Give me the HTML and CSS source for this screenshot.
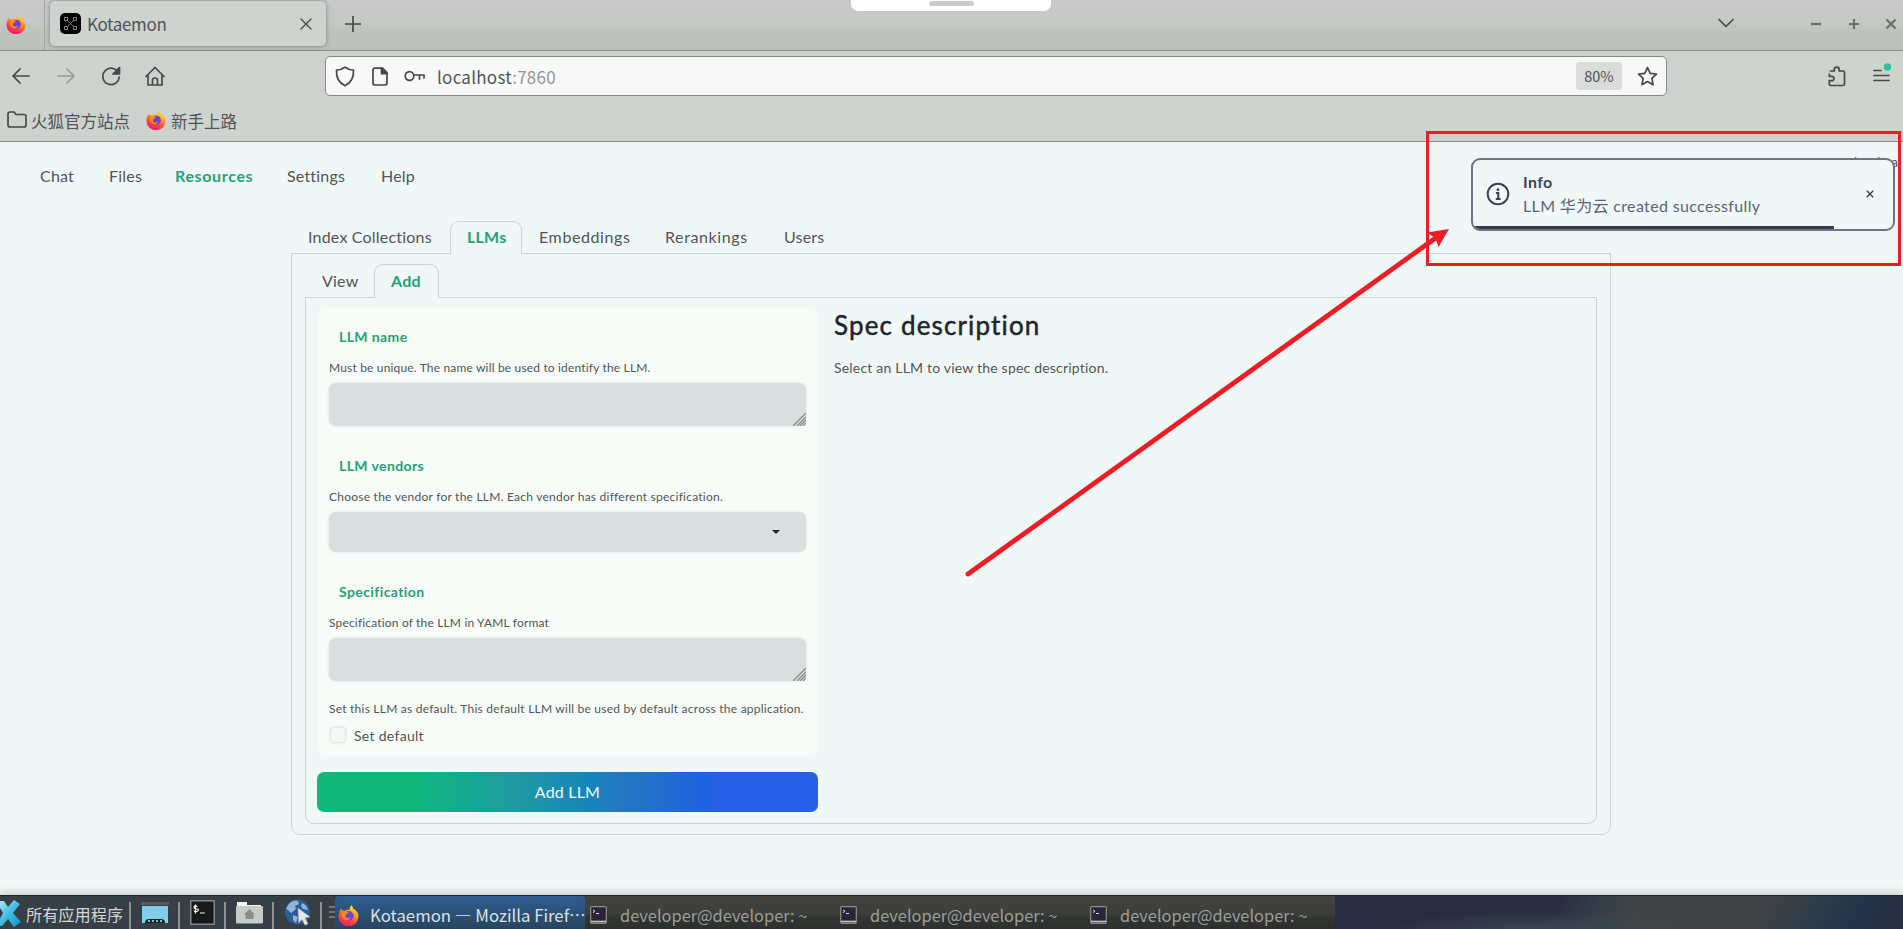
FILE: index.html
```
<!DOCTYPE html>
<html lang="zh-CN">
<head>
<meta charset="UTF-8" />
<meta name="viewport" content="width=device-width, initial-scale=1" />
<title>Kotaemon</title>
<link rel="stylesheet" href="styles.css">
</head>
<body>

<!-- 共用图标 -->
<svg class="defs" width="0" height="0" aria-hidden="true">
  <defs>
    <linearGradient id="ffFlame" x1="0.8" y1="0" x2="0.3" y2="1">
      <stop offset="0" stop-color="#fff44f" />
      <stop offset="0.35" stop-color="#ffa01e" />
      <stop offset="0.65" stop-color="#ff4a3c" />
      <stop offset="1" stop-color="#f0147e" />
    </linearGradient>
    <linearGradient id="xBlue" x1="0" y1="0" x2="1" y2="1">
      <stop offset="0" stop-color="#c8f2fb" />
      <stop offset="0.5" stop-color="#3ec0e4" />
      <stop offset="1" stop-color="#0b92c4" />
    </linearGradient>
    <symbol id="firefox" viewBox="0 0 20 20">
      <path fill="url(#ffFlame)" d="M13 .3c1 1.500 1.300 2.500 1.400 3.600 1-.1 1.400.2 2 .9 1.800 1.600 3.100 3.600 3.100 6.200a9.500 9.300 0 0 1-19 0C.5 8 1.500 5 3.400 3.400l.5 1.900 3 .2C8.400 4.300 10 4.400 11 4.600 11 2.500 12 1 13 .3z" />
      <circle cx="10.300" cy="10.300" r="4.500" fill="#7440d4" />
      <path fill="#ff8a1c" d="M3.500 7c2-1.500 5-1 6.500.3L8 8.800c-1.500.7-1.600 2.700.3 3.500 1.800.7 3.200-.3 3.900-1-.5 3.200-4.300 3.900-6.300 2.300C4 12 3 9.500 3.500 7z" />
    </symbol>
    <symbol id="term" viewBox="0 0 17 18">
      <rect x=".7" y=".7" width="15.600" height="16.600" rx="1" fill="#29243a" stroke="#8f8c86" stroke-width="1.200" />
      <path d="M1 15.500h15" stroke="#cbc9bd" stroke-width="1.600" />
      <path d="M3 4l2 1.300-2 1.300M6 7.500h3" fill="none" stroke="#ddd" />
    </symbol>
  </defs>
</svg>

<div class="tabstrip">
  <div class="pinned"><svg width="20" height="20"><use href="#firefox" /></svg></div>
  <div class="browser-tab">
    <svg width="21" height="21" viewBox="0 0 21 21">
      <rect width="21" height="21" rx="5" fill="#000" />
      <g fill="none" stroke="#777">
        <rect x="4.500" y="4.500" width="3" height="3" /><rect x="13.500" y="4.500" width="3" height="3" />
        <rect x="4.500" y="13.500" width="3" height="3" /><rect x="13.500" y="13.500" width="3" height="3" />
        <path d="M7.500 7.500l6 6M13.500 7.500l-6 6" />
      </g>
    </svg>
    <span class="tab-title">Kotaemon</span>
    <svg class="stroke tab-close" width="12" height="12" viewBox="0 0 12 12"><path d="M1 1l10 10M11 1L1 11" /></svg>
  </div>
  <svg class="stroke new-tab" width="16" height="16" viewBox="0 0 16 16"><path d="M8 .5v15M.5 8h15" /></svg>
  <div class="window-buttons">
    <svg class="stroke" width="18" height="11" viewBox="0 0 18 11"><path d="M2 1.500l7 7 7-7" /></svg>
    <svg class="win" width="12" height="12" viewBox="0 0 12 12"><path d="M1 6h10" /></svg>
    <svg class="win" width="12" height="12" viewBox="0 0 12 12"><path d="M1 6h10M6 1v10" /></svg>
    <svg class="win" width="12" height="12" viewBox="0 0 12 12"><path d="M1.500 1.500l9 9M10.500 1.500l-9 9" /></svg>
  </div>
</div>

<div class="toolbar">
  <div class="nav-buttons">
    <svg class="stroke" width="20" height="18" viewBox="0 0 20 18"><path d="M9 2L2 9l7 7M2 9h16" /></svg>
    <svg class="stroke off" width="20" height="18" viewBox="0 0 20 18"><path d="M11 2l7 7-7 7M18 9H2" /></svg>
    <svg class="stroke" width="20" height="20" viewBox="0 0 20 20"><path d="M17.500 7A8.200 8.200 0 1 0 18.200 11" /><path class="solid" d="M18.500 1.500v6.500H12z" /></svg>
    <svg class="stroke" width="20" height="20" viewBox="0 0 20 20"><path d="M1 10.500l9-9 9 9M3 9v10h14V9M7.500 19v-5q0-2 2.500-2t2.500 2v5" /></svg>
  </div>
  <div class="urlbar">
    <svg class="stroke" width="20" height="21" viewBox="0 0 20 21"><path d="M10 1.200q4.500 3 8.500 3 .6 11-8.500 15.500Q.9 15.200 1.500 4.200q4 0 8.500-3z" /></svg>
    <svg class="stroke" width="16" height="19" viewBox="0 0 16 19"><path d="M3 1.200h7.500l4.500 4.500V16q0 2-2 2H3q-2 0-2-2V3q0-1.800 2-1.800z" /><path class="solid" d="M9.500 1.200v5.500H15z" /></svg>
    <svg class="stroke key" width="21" height="12" viewBox="0 0 21 12"><circle cx="5.500" cy="6" r="4.300" /><path d="M10 5h10v3M15.500 5v4" /></svg>
    <span class="url">localhost<i>:7860</i></span>
    <span class="zoom">80%</span>
    <svg class="stroke star" width="21" height="21" viewBox="0 0 21 21"><path d="M10.500 1.500l2.700 5.800 6.300.8-4.700 4.300 1.300 6.300-5.600-3.100-5.600 3.100 1.300-6.300L1.500 8.100l6.300-.8z" /></svg>
  </div>
  <div class="menu-buttons">
    <svg class="stroke" width="18" height="21" viewBox="0 0 18 21"><path d="M2.500 5h3.800V3.500a2.400 2.400 0 0 1 4.900 0V5H15q1.500 0 1.500 1.500V18q0 1.500-1.500 1.500H3q-1.700 0-1.700-1.500v-3.300h2.500a2.200 2.200 0 0 0 0-4.400H1.300V8" /></svg>
    <svg class="stroke" width="18" height="22" viewBox="0 0 18 22"><path d="M1 9.500h7M1 14.500h15M1 19.500h15" /><circle cx="14.500" cy="6" r="3.800" fill="#2ac3a2" stroke="none" /></svg>
  </div>
</div>

<div class="bookmarks">
  <svg class="stroke" width="20" height="18" viewBox="0 0 20 18"><path d="M1 3q0-2 2-2h4l2 2.500h8q2 0 2 2V14q0 2-2 2H3q-2 0-2-2z" /></svg>
  <span>火狐官方站点</span>
  <svg class="bm-icon" width="20" height="20"><use href="#firefox" /></svg>
  <span>新手上路</span>
</div>

<main class="page">
  <nav class="app-nav">
    <span>Chat</span>
    <span>Files</span>
    <span class="active">Resources</span>
    <span>Settings</span>
    <span>Help</span>
  </nav>

  <div class="outer-tabs">
    <span>Index Collections</span>
    <span class="selected">LLMs</span>
    <span class="wide">Embeddings</span>
    <span class="wide">Rerankings</span>
    <span>Users</span>
  </div>

  <section class="outer-panel">
    <div class="inner-tabs">
      <span>View</span>
      <span class="selected">Add</span>
    </div>
    <div class="inner-panel">
      <div class="form-col">
        <div class="card">
          <div class="label">LLM name</div>
          <div class="hint">Must be unique. The name will be used to identify the LLM.</div>
          <div class="field area"><svg width="13" height="13" viewBox="0 0 13 13"><path d="M0 13L13 0M4 13l9-9M7 13l6-6M10 13l3-3" /></svg></div>

          <div class="label next">LLM vendors</div>
          <div class="hint vendors">Choose the vendor for the LLM. Each vendor has different specification.</div>
          <div class="field select"><i class="caret"></i></div>

          <div class="label next">Specification</div>
          <div class="hint">Specification of the LLM in YAML format</div>
          <div class="field area"><svg width="13" height="13" viewBox="0 0 13 13"><path d="M0 13L13 0M4 13l9-9M7 13l6-6M10 13l3-3" /></svg></div>

          <div class="hint default-hint">Set this LLM as default. This default LLM will be used by default across the application.</div>
          <div class="check-row"><i class="checkbox"></i><span>Set default</span></div>
        </div>
        <div class="add-btn">Add LLM</div>
      </div>
      <div class="spec-col">
        <h2>Spec description</h2>
        <p>Select an LLM to view the spec description.</p>
      </div>
    </div>
  </section>
</main>

<footer class="taskbar">
  <svg class="xlogo" width="21" height="28" viewBox="0 0 21 28"><path fill="url(#xBlue)" d="M-4 2H4l4 6 6-7 6 4-7 9 8 9-7 5-6-8-6 7h-6l7-13z" /></svg>
  <span class="apps">所有应用程序</span>
  <i class="sep"></i>
  <svg width="28" height="22" viewBox="0 0 28 22"><path fill="#555a5d" d="M0 0h28v3H0z" /><path fill="#80cfea" d="M1 4h26v17H1z" /><path fill="#16252c" d="M4 21q0-4 4-4h12q4 0 4 4z" /><path d="M7 19h15" stroke="#c7e9f4" stroke-width="1.500" stroke-dasharray="2 2" /></svg>
  <i class="sep"></i>
  <svg width="25" height="25" viewBox="0 0 25 25"><rect x=".8" y=".8" width="23.400" height="23.400" fill="#171819" stroke="#8c8f8f" stroke-width="1.400" /><path d="M7.500 6.500Q4 5 4 7t3 2 0 2.500q-2 .5-3-.5M5.500 4.500v9M10 13h5" fill="none" stroke="#eee" stroke-width="1.200" /></svg>
  <i class="sep"></i>
  <svg width="27" height="23" viewBox="0 0 27 23"><path fill="#f4f4f2" d="M1 1h10v3h14v4H1z" /><rect y="5" width="27" height="17.500" rx="1" fill="#c9cbc7" /><path fill="#898c88" d="M13.500 8l5.500 5.500h-1.500V18H9.500v-4.500H8z" /></svg>
  <i class="sep"></i>
  <svg width="27" height="27" viewBox="0 0 27 27"><circle cx="13.500" cy="13" r="12.500" fill="#2b5d9c" /><path fill="#92b3d8" d="M4 6q5-6 10-4l1 3-4 2 1 3-5 4-3-3-2-1zM9 16l5 2-2 6-3-3zM18 4q5 2 6 7l-5-1-2-3z" /><path fill="#e8e8e8" stroke="#a1a5a8" stroke-width=".6" d="M14 9l12 9-5 .8 3 6-3 1.400-3-5.600-3.300 3.200z" /></svg>
  <i class="sep last"></i>
  <svg class="grip" width="6" height="15" viewBox="0 0 6 15"><path d="M0 2h6M0 7h6M0 12h6" stroke="#82888b" stroke-width="1.500" /></svg>
  <div class="task current"><svg width="21" height="21"><use href="#firefox" /></svg><span>Kotaemon — Mozilla Firef⋯</span></div>
  <div class="task"><svg width="17" height="18"><use href="#term" /></svg><span>developer@developer: ~</span></div>
  <div class="task"><svg width="17" height="18"><use href="#term" /></svg><span>developer@developer: ~</span></div>
  <div class="task"><svg width="17" height="18"><use href="#term" /></svg><span>developer@developer: ~</span></div>
  <div class="wallpaper"></div>
</footer>

<!-- 顶部拖动条 -->
<div class="handle"><i></i></div>

<!-- 提示消息 -->
<div class="behind">local a</div>
<div class="toast">
  <svg width="24" height="24" viewBox="0 0 24 24"><circle cx="12" cy="12" r="10.300" fill="none" stroke="#3a4052" stroke-width="2" /><circle cx="12" cy="7.700" r="1.400" fill="#3a4052" /><path d="M10 11h2.300v5.500M9.800 17h4.800" fill="none" stroke="#3a4052" stroke-width="2" /></svg>
  <div class="toast-text">
    <strong>Info</strong>
    <span>LLM 华为云 created successfully</span>
  </div>
  <svg class="toast-close" width="8" height="8" viewBox="0 0 8 8"><path d="M.8.8l6.400 6.400M7.200.8L.8 7.200" stroke="#3a4052" stroke-width="1.400" /></svg>
  <i class="progress"></i>
</div>

<!-- 标注 -->
<svg class="marks" width="1903" height="929" viewBox="0 0 1903 929">
  <rect x="1427.500" y="132.500" width="472" height="132" fill="none" stroke="#ee1c24" stroke-width="3" />
  <path d="M968 574L1437 237" stroke="#ee1c24" stroke-width="4.800" stroke-linecap="round" />
  <path d="M1449 229l-10.500 18-3-8.500-7.500-5.500.500-.800z" fill="#ee1c24" />
</svg>

</body>
</html>
```
FILE: styles.css
```
* {
  box-sizing: border-box;
}
body {
  margin: 0;
  width: 1903px;
  height: 929px;
  overflow: hidden;
  position: relative;
  background: #f0f8f7;
  color: #505457;
  font-family: "Noto Sans CJK SC", "Noto Sans", sans-serif;
}
svg {
  display: block;
  flex: none;
}
i {
  font-style: normal;
}
.defs {
  position: absolute;
}
.stroke {
  fill: none;
  stroke: #464a47;
  stroke-width: 1.7;
  stroke-linecap: round;
  stroke-linejoin: round;
}
.stroke.off {
  stroke: #989c98;
}
.solid {
  fill: #464a47;
}
/* 标签栏 */
.tabstrip {
  display: flex;
  align-items: center;
  height: 51px;
  padding-bottom: 3px;
  border-bottom: 1px solid #888b88;
  background: linear-gradient(#c6ccc6 0, #c8c8c8 6px, #c8c8c8 22px, #c0c6bd 26px, #bec3bf 33px, #bdc1bd 50px);
}
.pinned {
  width: 45px;
  height: 50px;
  margin-bottom: -3px;
  padding: 14px 0 0 6px;
  border-right: 1px solid #a2a5a2;
}
.browser-tab {
  display: flex;
  align-items: center;
  width: 276px;
  height: 45px;
  margin-left: 5px;
  padding: 0 14px 0 10px;
  border-radius: 5px;
  background: #cfd3cf;
  box-shadow: 0 0 4px #777;
}
.tab-title {
  margin-left: 6px;
  font-size: 17px;
  letter-spacing: -0.35px;
}
.tab-close {
  margin-left: auto;
  stroke-width: 1.3;
}
.new-tab {
  margin-left: 19px;
}
.window-buttons {
  display: flex;
  align-items: center;
  margin-left: auto;
  padding-right: 6px;
  gap: 25.5px;
}
.window-buttons .stroke {
  margin-right: 50px;
}
.win {
  fill: none;
  stroke: #6d716e;
  stroke-width: 2.2;
}
/* 工具栏 */
.toolbar {
  display: flex;
  align-items: center;
  height: 50px;
  background: #cfd3cf;
}
.nav-buttons {
  display: flex;
  align-items: center;
  width: 325px;
  padding-left: 11px;
  gap: 24.8px;
}
.urlbar {
  display: flex;
  align-items: center;
  width: 1342px;
  height: 40px;
  padding: 0 8px 0 9px;
  border: 1.5px solid #858885;
  border-radius: 5px;
  background: #f8f8f8;
  gap: 17px;
}
.key {
  margin-left: -1px;
}
.url {
  margin-left: -5px;
  font-size: 17px;
  letter-spacing: 0.25px;
}
.url i {
  color: #939693;
}
.zoom {
  width: 46px;
  height: 28px;
  margin-left: auto;
  border-radius: 4px;
  background: #d9dcd9;
  font-size: 14.5px;
  line-height: 28px;
  text-align: center;
}
.star {
  margin-left: -2px;
}
.menu-buttons {
  display: flex;
  align-items: center;
  margin-left: auto;
  padding-right: 12px;
  gap: 27px;
}
.menu-buttons svg:last-child {
  margin-top: -8px;
}
.bookmarks {
  display: flex;
  align-items: center;
  height: 41px;
  padding: 0 0 0 7px;
  border-bottom: 1.5px solid #888b88;
  background: #cfd3cf;
  font-size: 16.5px;
  gap: 5px;
}
.bookmarks .stroke {
  margin: -2px -1px 0 0;
}
.bm-icon {
  margin: -2px 0 0 11px;
}
/* 页面 */
.page {
  height: 753px;
  font-family: Lato, "Noto Sans CJK SC", sans-serif;
  font-size: 16px;
  letter-spacing: 0.2px;
}
.app-nav {
  display: grid;
  grid-template-columns: 69px 66px 112px 94px auto;
  height: 79px;
  padding-left: 40px;
  line-height: 68px;
}
.app-nav .active {
  color: #1fa377;
  font-weight: bold;
  letter-spacing: 0.65px;
}
.outer-tabs {
  display: grid;
  grid-template-columns: 159px 72px 126px 119px auto;
  height: 33px;
  margin: 0 0 -1px 291px;
  line-height: 31px;
}
.outer-tabs span,
.inner-tabs span {
  padding-left: 17px;
}
.outer-tabs .wide {
  letter-spacing: 0.6px;
}
.outer-tabs .selected,
.inner-tabs .selected {
  position: relative;
  padding-left: 16px;
  border: 1.5px solid #ced4d3;
  border-bottom: 0;
  border-radius: 9px 9px 0 0;
  background: #f0f8f7;
  color: #1fa377;
  font-weight: bold;
}
.outer-tabs .selected {
  line-height: 29px;
}
.outer-panel {
  width: 1320px;
  margin-left: 291px;
  padding: 10px 13px 10px;
  border: 1.5px solid #ced4d3;
  border-radius: 0 0 9px 9px;
}
.inner-tabs {
  display: grid;
  grid-template-columns: 69px 65px auto;
  height: 34px;
  margin-bottom: -1px;
  line-height: 33px;
}
.inner-tabs .selected {
  line-height: 32px;
}
.inner-panel {
  display: flex;
  height: 527px;
  padding: 10px 11px;
  border: 1.5px solid #ced4d3;
  border-radius: 0 0 9px 9px;
}
.form-col {
  width: 501px;
}
.card {
  height: 448px;
  padding: 19px 12px 10px;
  border-radius: 9px;
  background: #f8fcf9;
}
.label {
  height: 20px;
  padding-left: 10px;
  color: #1fa377;
  font-size: 14px;
  font-weight: bold;
  line-height: 20px;
  letter-spacing: 0.4px;
}
.label.next {
  margin-top: 30px;
}
.hint {
  height: 16px;
  margin: 13px 0 7px;
  font-size: 12px;
  line-height: 16px;
  letter-spacing: 0.17px;
  white-space: nowrap;
}
.hint.vendors {
  letter-spacing: 0.24px;
}
.field {
  display: flex;
  align-items: flex-end;
  justify-content: flex-end;
  height: 43px;
  border-radius: 7px;
  background: #d8e0df;
  box-shadow: 0 0 3px #d8e0df;
}
.field path {
  stroke: #858b8a;
  stroke-width: 1.3;
}
.field.select {
  align-items: center;
  height: 40px;
  padding-right: 26px;
}
.caret {
  border: 4.5px solid transparent;
  border-top: 4.5px solid #222;
  border-bottom: 0;
}
.hint.default-hint {
  margin: 20px 0 0;
  letter-spacing: 0.23px;
}
.check-row {
  display: flex;
  align-items: center;
  height: 20px;
  margin-top: 8px;
  padding-left: 1px;
  font-size: 14px;
  letter-spacing: 0.3px;
  gap: 8px;
}
.checkbox {
  width: 16px;
  height: 16px;
  border: 1px solid #e0e8e6;
  border-radius: 4px;
  background: #f0f8f8;
  box-shadow: 0 0 3px #d8e0df;
}
.add-btn {
  height: 40px;
  margin-top: 16px;
  border-radius: 7px;
  background: linear-gradient(90deg, #12b77e 20%, #14a793 32%, #1f9d9f 38%, #1785bb 54%, #247abf 60%, #1e62e0 77%, #2660e8 80%);
  color: #f4fafa;
  line-height: 40px;
  text-align: center;
}
.spec-col {
  padding-left: 16px;
}
h2 {
  margin: 0;
  color: #22252b;
  font-size: 26px;
  font-weight: normal;
  line-height: 34px;
  letter-spacing: 1.15px;
  -webkit-text-stroke: 0.5px #22252b;
}
.spec-col p {
  margin: 16px 0 0;
  font-size: 14px;
  line-height: 20px;
}
/* 任务栏 */
.taskbar {
  display: flex;
  align-items: center;
  height: 34px;
  border-top: 1.5px solid #202625;
  background: #373f46;
  box-shadow: 0 -2px 8px #c3c7c3;
}
.apps {
  width: 99px;
  margin-left: 5px;
  color: #d3d7d8;
  font-size: 16.2px;
  line-height: 30px;
  padding-top: 2px;
  white-space: nowrap;
}
.sep {
  width: 2px;
  height: 27px;
  margin: 6px 10px 0 4px;
  background: #8d9394;
}
.sep ~ svg + .sep {
  margin-left: 9px;
}
.sep.last {
  margin-right: 7px;
}
.grip {
  margin-right: 0;
}
.task {
  display: flex;
  align-items: center;
  flex: none;
  width: 250px;
  height: 33px;
  padding: 5px 0 0 5px;
  background: linear-gradient(#424341, #3e3f3d 50%, #323632 65%, #2c2f2d);
  color: #9c9e9c;
  font-size: 16.4px;
  white-space: nowrap;
  gap: 13px;
}
.task.current {
  padding-left: 3px;
  border-radius: 4px 4px 0 0;
  background: linear-gradient(#2f5d90, #27445f);
  color: #dde2e6;
  font-size: 16.75px;
  gap: 11px;
}
.wallpaper {
  flex: 1;
  height: 33px;
  background:
    radial-gradient(ellipse 150px 18px at 200px 33px, #3b4650, transparent),
    linear-gradient(115deg, #282c40 38%, #303d48 45%, #414446 52%, #414446 73%, #303d48 82%, #24344b 91%, #282c3e);
}
/* 浮层 */
.handle {
  position: absolute;
  top: 0;
  left: 851px;
  width: 200px;
  height: 11px;
  border-radius: 0 0 7px 7px;
  background: #fff;
}
.handle i {
  display: block;
  width: 45px;
  height: 5px;
  margin: 1px auto 0;
  border-radius: 3px;
  background: #cbcbcb;
}
.behind {
  position: absolute;
  top: 154px;
  right: 5px;
  font: 13px/17px Lato, sans-serif;
  word-spacing: 8px;
}
.toast {
  position: absolute;
  top: 158px;
  left: 1471px;
  display: flex;
  align-items: center;
  width: 424px;
  height: 73px;
  padding: 0 19px 2px 13px;
  overflow: hidden;
  border: 2px solid #6d7484;
  border-radius: 9px;
  background: #f0f8f7;
  color: #3f4557;
  font-family: Lato, "Noto Sans CJK SC", sans-serif;
  font-size: 16px;
  letter-spacing: 0.35px;
}
.toast-text {
  display: flex;
  flex-direction: column;
  margin-left: 13px;
  line-height: 24px;
}
.toast-text span {
  color: #5d6373;
}
.toast-close {
  margin-left: auto;
}
.progress {
  position: absolute;
  bottom: -1px;
  left: 0;
  width: 361px;
  height: 4px;
  background: #373d50;
}
.marks {
  position: absolute;
  top: 0;
  left: 0;
}
```
